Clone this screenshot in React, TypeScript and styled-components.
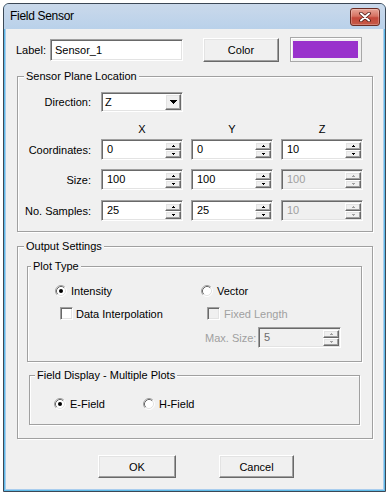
import React, { FC } from 'react';
import styled, { createGlobalStyle } from 'styled-components';

const GlobalStyle = createGlobalStyle`
  html, body {
    margin: 0;
    padding: 0;
    background: #fff;
  }
  body {
    font-family: "Liberation Sans", Arial, sans-serif;
    font-size: 11px;
    color: #000;
  }
`;

const Window = styled.div`
  margin: 3px 0 0 3px;
  width: 383px;
  height: 489px;
  box-sizing: border-box;
  border: 1px solid #3c4856;
  border-radius: 6px 6px 0 0;
  background: #a9cdee;
  box-shadow: inset 0 0 0 1px #5fbbe8;
  display: flex;
  flex-direction: column;
`;

const TitleBar = styled.div`
  height: 25px;
  flex: none;
  display: flex;
  align-items: flex-start;
  justify-content: space-between;
  border-radius: 5px 5px 0 0;
  background: linear-gradient(#cad9eb, #b9d1ea);
`;

const Title = styled.span`
  margin: 5px 0 0 6px;
  font-size: 12px;
  line-height: 15px;
  letter-spacing: -0.3px;
`;

const CloseButton = styled.div`
  margin: 4px 5px 0 0;
  width: 30px;
  height: 18px;
  box-sizing: border-box;
  border: 1px solid #6b2b22;
  border-radius: 3px;
  background: linear-gradient(#e7a597 0%, #d67262 45%, #c4483a 55%, #c65a48 100%);
  box-shadow: inset 0 0 0 1px rgba(255, 255, 255, 0.25);
  display: flex;
  align-items: center;
  justify-content: center;
`;

const Client = styled.div`
  flex: 1;
  margin: 0 2px 2px 2px;
  padding: 8px 10px 0 11px;
  background: #f0f0f0;
  display: flex;
  flex-direction: column;
`;

const TopRow = styled.div`
  height: 25px;
  margin-left: -1px;
  display: flex;
  align-items: center;
`;

const FieldLabel = styled.span<{ $width: number }>`
  width: ${p => p.$width}px;
  flex: none;
  white-space: nowrap;
`;

const sunken = `
  box-sizing: border-box;
  border: 1px solid;
  border-color: #a0a0a0 #fff #fff #a0a0a0;
  box-shadow: inset 1px 1px 0 #696969, inset -1px -1px 0 #e3e3e3;
`;

const raised = `
  box-sizing: border-box;
  border: 1px solid;
  border-color: #fff #696969 #696969 #fff;
  box-shadow: inset -1px -1px 0 #a0a0a0, inset 1px 1px 0 #e3e3e3;
  background: #f0f0f0;
`;

const TextField = styled.div`
  ${sunken}
  width: 133px;
  height: 22px;
  padding-left: 4px;
  line-height: 20px;
  background: #fff;
`;

const PushButton = styled.div<{ $width: number; $height: number }>`
  ${raised}
  width: ${p => p.$width}px;
  height: ${p => p.$height}px;
  flex: none;
  display: flex;
  align-items: center;
  justify-content: center;
`;

const ColorButton = styled(PushButton)`
  margin-left: 20px;
`;

const Swatch = styled.div`
  margin-left: 11px;
  width: 72px;
  height: 25px;
  box-sizing: border-box;
  border: 1px solid #a8a8a8;
  box-shadow: inset 1px 1px 0 #fff;
  padding: 3px 3px 3px 2px;
`;

const SwatchFill = styled.div<{ $color: string }>`
  height: 100%;
  background: ${p => p.$color};
`;

const Group = styled.fieldset<{ $legendShift: number; $top: number; $side?: string }>`
  margin: ${p => p.$top}px ${p => p.$side ?? '0'} 0 ${p => p.$side ?? '0'};
  padding: 0;
  min-width: 0;
  border: 1px solid #a0a0a0;
  box-shadow: inset 1px 1px 0 #fff, 1px 1px 0 #fff;

  > legend {
    margin-left: ${p => p.$legendShift}px;
    padding: 0 2px;
    line-height: 13px;
    background: #f0f0f0;
  }
`;

const GroupBody = styled.div<{ $pad: string }>`
  padding: ${p => p.$pad};
`;

const PlaneRow = styled.div<{ $top: number }>`
  display: grid;
  grid-template-columns: 75px repeat(3, 82px);
  column-gap: 8px;
  align-items: center;
  margin-top: ${p => p.$top}px;
`;

const RowLabel = styled.span`
  text-align: right;
  padding-right: 2px;
  white-space: nowrap;
`;

const AxisLabel = styled.span`
  text-align: center;
  line-height: 13px;
`;

const SelectBox = styled.div`
  ${sunken}
  width: 82px;
  height: 20px;
  padding: 1px;
  background: #fff;
  display: flex;
`;

const SelectValue = styled.span`
  flex: 1;
  padding-left: 2px;
  line-height: 16px;
`;

const DropButton = styled.div`
  ${raised}
  width: 16px;
  height: 16px;
  display: flex;
  align-items: center;
  justify-content: center;
`;

const SpinBox = styled.div<{ $width: number; $disabled?: boolean }>`
  ${sunken}
  width: ${p => p.$width}px;
  height: 21px;
  padding: 1px;
  background: ${p => (p.$disabled ? '#f0f0f0' : '#fff')};
  display: flex;
`;

const SpinValue = styled.span<{ $tone?: string }>`
  flex: 1;
  padding-left: 4px;
  line-height: 17px;
  color: ${p => p.$tone ?? '#000'};
`;

const SpinButtons = styled.div`
  width: 16px;
  padding-top: 1px;
  display: flex;
  flex-direction: column;
`;

const SpinButton = styled.div`
  ${raised}
  height: 8px;
  display: flex;
  align-items: center;
  justify-content: center;
`;

const PlotColumns = styled.div`
  display: grid;
  grid-template-columns: 146px 1fr;
  padding: 11px 0 13px 27px;
`;

const OptionColumn = styled.div`
  display: flex;
  flex-direction: column;
  align-items: flex-start;
`;

const Option = styled.label<{ $indent?: number; $top?: number; $disabled?: boolean; $gap: number }>`
  display: flex;
  align-items: center;
  gap: ${p => p.$gap}px;
  height: 13px;
  margin-left: ${p => p.$indent ?? 0}px;
  margin-top: ${p => p.$top ?? 0}px;
  color: ${p => (p.$disabled ? '#a0a0a0' : '#000')};
  white-space: nowrap;
`;

const CheckBox = styled.span<{ $disabled?: boolean }>`
  ${sunken}
  width: 13px;
  height: 13px;
  flex: none;
  background: ${p => (p.$disabled ? '#f0f0f0' : '#fff')};
`;

const MaxSizeRow = styled.div`
  margin: 7px 0 0 4px;
  display: flex;
  align-items: center;
  color: #a0a0a0;
`;

const FieldColumns = styled.div`
  display: grid;
  grid-template-columns: 89px 1fr;
  padding: 15px 0 14px 24px;
`;

const ButtonRow = styled.div`
  margin-top: 16px;
  padding-left: 81px;
  display: flex;
  gap: 43px;
`;

const CloseGlyph: FC = () => (
  <svg width="12" height="10" viewBox="0 0 12 10">
    <path d="M2 1.5 L10 8.5 M10 1.5 L2 8.5" stroke="#4a1812" strokeWidth="3.6" strokeLinecap="round" />
    <path d="M2 1.5 L10 8.5 M10 1.5 L2 8.5" stroke="#fff" strokeWidth="2" strokeLinecap="round" />
  </svg>
);

const DropArrow: FC = () => (
  <svg width="7" height="4" viewBox="0 0 7 4" shapeRendering="crispEdges">
    <rect x="0" y="0" width="7" height="1" fill="#000" />
    <rect x="1" y="1" width="5" height="1" fill="#000" />
    <rect x="2" y="2" width="3" height="1" fill="#000" />
    <rect x="3" y="3" width="1" height="1" fill="#000" />
  </svg>
);

const SpinArrow: FC<{ up?: boolean; disabled?: boolean }> = ({ up, disabled }) => {
  const c = disabled ? '#a0a0a0' : '#000';
  return (
    <svg width="3" height="2" viewBox="0 0 3 2" shapeRendering="crispEdges">
      <rect x="1" y={up ? 0 : 1} width="1" height="1" fill={c} />
      <rect x="0" y={up ? 1 : 0} width="3" height="1" fill={c} />
    </svg>
  );
};

const RadioMark: FC<{ checked?: boolean }> = ({ checked }) => (
  <svg width="12" height="12" viewBox="0 0 12 12">
    <circle cx="6" cy="6" r="5" fill="#fff" />
    <path d="M2.11 9.89 A5.5 5.5 0 0 1 9.89 2.11" fill="none" stroke="#a0a0a0" />
    <path d="M2.82 9.18 A4.5 4.5 0 0 1 9.18 2.82" fill="none" stroke="#696969" />
    <path d="M9.89 2.11 A5.5 5.5 0 0 1 2.11 9.89" fill="none" stroke="#fff" />
    <path d="M9.18 2.82 A4.5 4.5 0 0 1 2.82 9.18" fill="none" stroke="#e3e3e3" />
    {checked && <circle cx="6" cy="6" r="2" fill="#000" />}
  </svg>
);

interface SpinProps {
  value: string;
  width?: number;
  disabled?: boolean;
  tone?: string;
}

const Spin: FC<SpinProps> = ({ value, width = 82, disabled, tone }) => (
  <SpinBox $width={width} $disabled={disabled}>
    <SpinValue $tone={tone ?? (disabled ? '#a0a0a0' : '#000')}>{value}</SpinValue>
    <SpinButtons>
      <SpinButton><SpinArrow up disabled={disabled} /></SpinButton>
      <SpinButton><SpinArrow disabled={disabled} /></SpinButton>
    </SpinButtons>
  </SpinBox>
);

const planeRows = [
  { label: 'Coordinates:', top: 3, values: ['0', '0', '10'], zDisabled: false },
  { label: 'Size:', top: 9, values: ['100', '100', '100'], zDisabled: true },
  { label: 'No. Samples:', top: 10, values: ['25', '25', '10'], zDisabled: true },
];

const App: FC = () => {
  return (
    <>
      <GlobalStyle />
      <Window>
        <TitleBar>
          <Title>Field Sensor</Title>
          <CloseButton>
            <CloseGlyph />
          </CloseButton>
        </TitleBar>

        <Client>
          <TopRow>
            <FieldLabel $width={34}>Label:</FieldLabel>
            <TextField>Sensor_1</TextField>
            <ColorButton $width={76} $height={24}>Color</ColorButton>
            <Swatch>
              <SwatchFill $color="#9932cc" />
            </Swatch>
          </TopRow>

          <Group $legendShift={6} $top={8}>
            <legend>Sensor Plane Location</legend>
            <GroupBody $pad="0 0 10px 0">
              <PlaneRow $top={9}>
                <RowLabel>Direction:</RowLabel>
                <SelectBox>
                  <SelectValue>Z</SelectValue>
                  <DropButton>
                    <DropArrow />
                  </DropButton>
                </SelectBox>
              </PlaneRow>
              <PlaneRow $top={11}>
                <span />
                <AxisLabel>X</AxisLabel>
                <AxisLabel>Y</AxisLabel>
                <AxisLabel>Z</AxisLabel>
              </PlaneRow>
              {planeRows.map(row => (
                <PlaneRow key={row.label} $top={row.top}>
                  <RowLabel>{row.label}</RowLabel>
                  <Spin value={row.values[0]} />
                  <Spin value={row.values[1]} />
                  <Spin value={row.values[2]} disabled={row.zDisabled} />
                </PlaneRow>
              ))}
            </GroupBody>
          </Group>

          <Group $legendShift={6} $top={8}>
            <legend>Output Settings</legend>
            <GroupBody $pad="7px 10px 13px 9px">
              <Group $legendShift={3} $top={0}>
                <legend>Plot Type</legend>
                <PlotColumns>
                  <OptionColumn>
                    <Option $gap={4}>
                      <RadioMark checked />
                      Intensity
                    </Option>
                    <Option $gap={3} $indent={5} $top={10}>
                      <CheckBox />
                      Data Interpolation
                    </Option>
                  </OptionColumn>
                  <OptionColumn>
                    <Option $gap={4}>
                      <RadioMark />
                      Vector
                    </Option>
                    <Option $gap={4} $indent={6} $top={10} $disabled>
                      <CheckBox $disabled />
                      Fixed Length
                    </Option>
                    <MaxSizeRow>
                      <FieldLabel $width={53}>Max. Size:</FieldLabel>
                      <Spin value="5" width={83} disabled tone="#6d6d6d" />
                    </MaxSizeRow>
                  </OptionColumn>
                </PlotColumns>
              </Group>

              <Group $legendShift={5} $top={7} $side="2px">
                <legend>Field Display - Multiple Plots</legend>
                <FieldColumns>
                  <Option $gap={4}>
                    <RadioMark checked />
                    E-Field
                  </Option>
                  <Option $gap={4}>
                    <RadioMark />
                    H-Field
                  </Option>
                </FieldColumns>
              </Group>
            </GroupBody>
          </Group>

          <ButtonRow>
            <PushButton $width={78} $height={23}>OK</PushButton>
            <PushButton $width={75} $height={23}>Cancel</PushButton>
          </ButtonRow>
        </Client>
      </Window>
    </>
  );
};

export default App;
